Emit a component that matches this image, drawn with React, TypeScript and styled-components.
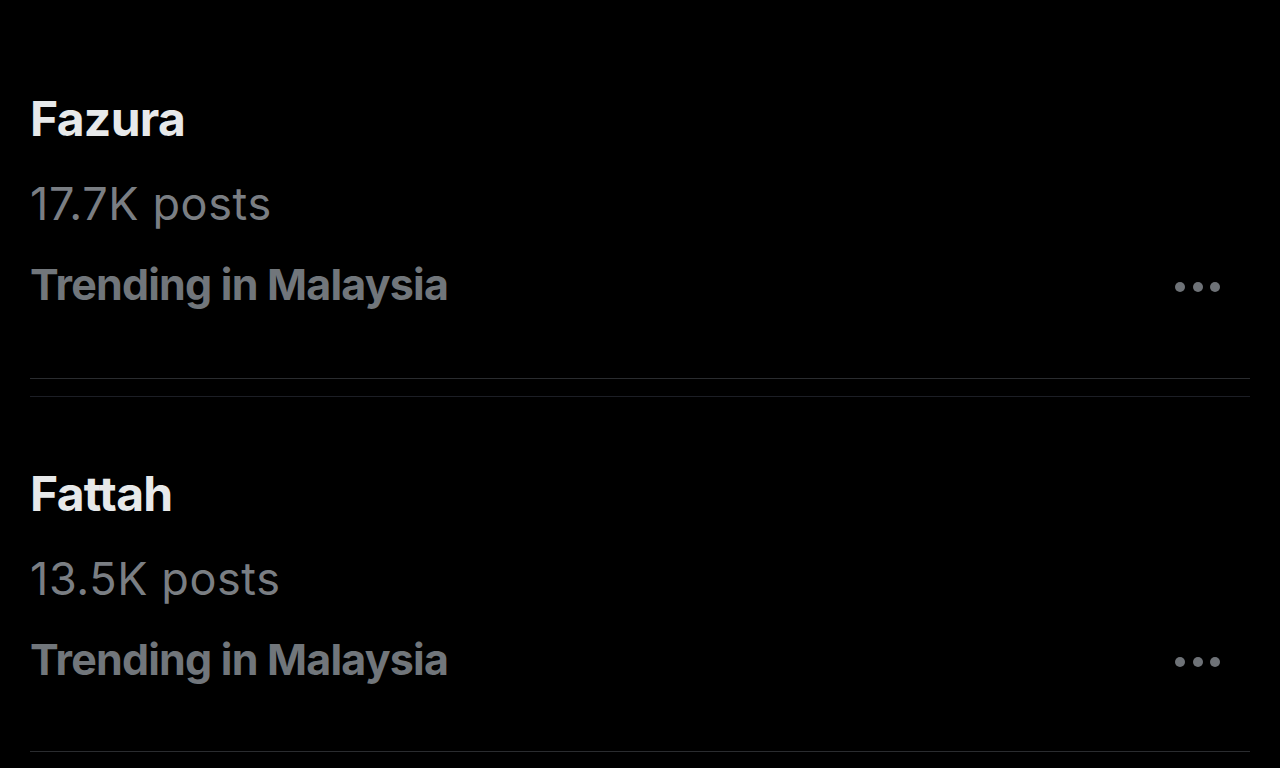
import React from "react";
import styled, { createGlobalStyle } from "styled-components";

const Global = createGlobalStyle`
  html, body { margin: 0; padding: 0; background: #000; }
  body { font-family: Inter, "Noto Sans", sans-serif; }
`;

const Page = styled.div`
  width: 1280px;
  height: 768px;
  background: #000;
  padding: 0 30px;
  box-sizing: border-box;
  overflow: hidden;
`;

const Block = styled.div<{ $height: number; $pad: number; $line: string }>`
  display: flex;
  justify-content: space-between;
  align-items: flex-start;
  height: ${(p) => p.$height}px;
  padding-top: ${(p) => p.$pad}px;
  box-sizing: border-box;
  border-bottom: 1.5px solid ${(p) => p.$line};
`;

const Texts = styled.div`
  display: flex;
  flex-direction: column;
`;

const Title = styled.div`
  font-size: 48px;
  line-height: 58px;
  font-weight: 700;
  color: #e7e9ea;
  letter-spacing: -0.7px;
`;

const Count = styled.div`
  font-size: 45px;
  line-height: 58px;
  margin-top: 27px;
  font-weight: 400;
  color: #7a7e83;
  letter-spacing: 0.6px;
`;

const Meta = styled.div`
  font-size: 43px;
  line-height: 58px;
  margin-top: 22px;
  font-weight: 700;
  color: #71767b;
  letter-spacing: -0.8px;
`;

const MoreWrap = styled.div`
  padding-top: 192px;
  margin-right: 30px;
`;

const More = styled.div`
  display: flex;
  gap: 7.5px;
`;

const Dot = styled.span`
  width: 10px;
  height: 10px;
  border-radius: 50%;
  background: #6e7277;
`;

const Gap = styled.div`
  height: 18px;
  box-sizing: border-box;
  border-bottom: 1.5px solid #1c1e25;
`;

type Trend = { name: string; posts: string; place: string };

const trends: Trend[] = [
  { name: "Fazura", posts: "17.7K posts", place: "Trending in Malaysia" },
  { name: "Fattah", posts: "13.5K posts", place: "Trending in Malaysia" },
];

function TrendRow({ t, height, pad, line }: { t: Trend; height: number; pad: number; line: string }) {
  return (
    <Block $height={height} $pad={pad} $line={line}>
      <Texts>
        <Title>{t.name}</Title>
        <Count>{t.posts}</Count>
        <Meta>{t.place}</Meta>
      </Texts>
      <MoreWrap>
        <More>
          <Dot />
          <Dot />
          <Dot />
        </More>
      </MoreWrap>
    </Block>
  );
}

export default function App() {
  return (
    <>
      <Global />
      <Page>
        <TrendRow t={trends[0]} height={379} pad={90} line="#2a2c2f" />
        <Gap />
        <TrendRow t={trends[1]} height={355} pad={68} line="#2a2c2f" />
      </Page>
    </>
  );
}
